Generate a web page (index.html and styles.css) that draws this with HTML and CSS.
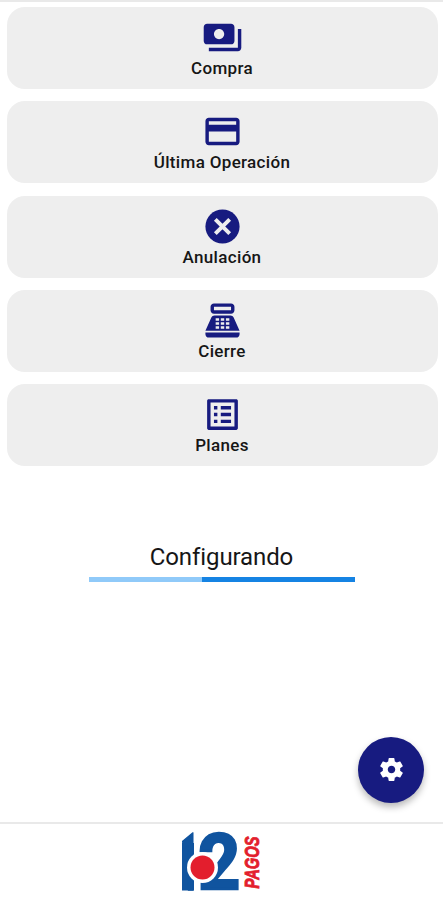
FILE: index.html
```html
<!DOCTYPE html>
<html lang="es">
<head>
    <meta charset="UTF-8">
    <meta name="viewport" content="width=device-width, initial-scale=1.0">
    <title>12 Pagos</title>
    <link rel="stylesheet" href="styles.css">
</head>
<body>

    <main class="content">
        <nav class="menu">
            <button class="option">
                <svg class="icon" viewBox="0 0 24 24"><path d="M19 14V6c0-1.1-.9-2-2-2H3c-1.1 0-2 .9-2 2v8c0 1.1.9 2 2 2h14c1.1 0 2-.9 2-2zm-9-1c-1.66 0-3-1.34-3-3s1.34-3 3-3 3 1.34 3 3-1.34 3-3 3zm13-6v11c0 1.1-.9 2-2 2H4v-2h17V7h2z"/></svg>
                <span class="label">Compra</span>
            </button>
            <button class="option">
                <svg class="icon" viewBox="0 0 24 24"><path d="M20 4H4c-1.11 0-1.99.89-1.99 2L2 18c0 1.11.89 2 2 2h16c1.11 0 2-.89 2-2V6c0-1.11-.89-2-2-2zm0 14H4v-6h16v6zm0-10H4V6h16v2z"/></svg>
                <span class="label">Última Operación</span>
            </button>
            <button class="option">
                <svg class="icon" viewBox="0 0 24 24">
                    <circle cx="12" cy="12" r="10"/>
                    <path class="cross" d="M7.8 7.8l8.4 8.4M16.2 7.8l-8.4 8.4"/>
                </svg>
                <span class="label">Anulación</span>
            </button>
            <button class="option">
                <svg class="icon" viewBox="0 0 24 24">
                    <path d="M17 2H7c-1.1 0-2 .9-2 2v2c0 1.1.9 2 2 2h10c1.1 0 2-.9 2-2V4c0-1.1-.9-2-2-2zm0 4H7V4h10v2zm3 16H4c-1.1 0-2-.9-2-2v-1h20v1c0 1.1-.9 2-2 2zm-1.47-11.81C18.21 9.47 17.49 9 16.7 9H7.3c-.79 0-1.51.47-1.83 1.19L2 18h20l-3.47-7.81z"/>
                    <path class="keys" d="M8 10.7h2v1.5H8zm3 0h2v1.5h-2zm3 0h2v1.5h-2zM8 13h2v1.5H8zm3 0h2v1.5h-2zm3 0h2v1.5h-2zM8 15.3h2v1.5H8zm3 0h2v1.5h-2zm3 0h2v1.5h-2z"/>
                </svg>
                <span class="label">Cierre</span>
            </button>
            <button class="option">
                <svg class="icon" viewBox="0 0 24 24"><path d="M19 5v14H5V5h14m1.1-2H3.9c-.5 0-.9.4-.9.9v16.2c0 .4.4.9.9.9h16.2c.4 0 .9-.5.9-.9V3.9c0-.5-.5-.9-.9-.9zM11 7h6v2h-6V7zm0 4h6v2h-6v-2zm0 4h6v2h-6zM7 7h2v2H7zm0 4h2v2H7zm0 4h2v2H7z"/></svg>
                <span class="label">Planes</span>
            </button>
        </nav>

        <section class="status">
            <p class="status-text">Configurando</p>
            <div class="progress"><div class="progress-bar"></div></div>
        </section>

        <button class="fab" aria-label="Configuración">
            <svg class="fab-icon" viewBox="0 0 24 24"><path d="M19.14 12.94c.04-.3.06-.61.06-.94 0-.32-.02-.64-.07-.94l2.03-1.58c.18-.14.23-.41.12-.61l-1.92-3.32c-.12-.22-.37-.29-.59-.22l-2.39.96c-.5-.38-1.03-.7-1.62-.94l-.36-2.54c-.04-.24-.24-.41-.48-.41h-3.84c-.24 0-.43.17-.47.41l-.36 2.54c-.59.24-1.13.57-1.62.94l-2.39-.96c-.22-.08-.47 0-.59.22L2.74 8.87c-.12.21-.08.47.12.61l2.03 1.58c-.05.3-.09.63-.09.94s.02.64.07.94l-2.03 1.58c-.18.14-.23.41-.12.61l1.92 3.32c.12.22.37.29.59.22l2.39-.96c.5.38 1.03.7 1.62.94l.36 2.54c.05.24.24.41.48.41h3.84c.24 0 .44-.17.47-.41l.36-2.54c.59-.24 1.13-.56 1.62-.94l2.39.96c.22.08.47 0 .59-.22l1.92-3.32c.12-.22.07-.47-.12-.61l-2.01-1.58zM12 15.1c-1.7 0-3.1-1.4-3.1-3.1s1.4-3.1 3.1-3.1 3.1 1.4 3.1 3.1-1.4 3.1-3.1 3.1z"/></svg>
        </button>
    </main>

    <footer class="footer">
        <svg class="logo" viewBox="0 0 80 62">
            <rect class="logo-stem" x="0" y="12" width="12" height="47.5"/>
            <text class="logo-number logo-one" transform="translate(-2.6 58.7) scale(.44 1)" font-size="79">1</text>
            <text class="logo-number logo-two" transform="translate(16.2 58.2) scale(.95 1)" font-size="77">2</text>
            <circle cx="20.5" cy="36.5" r="15.5" fill="#fff"/>
            <circle cx="20.5" cy="36.5" r="12" fill="#e31e2d"/>
            <text class="logo-word" transform="translate(76.8 57.5) rotate(-90)" textLength="52" lengthAdjust="spacingAndGlyphs">PAGOS</text>
        </svg>
    </footer>

</body>
</html>
```
FILE: styles.css
```css
* {
    box-sizing: border-box;
}
body {
    margin: 0;
    height: 900px;
    display: flex;
    flex-direction: column;
    background-color: #fff;
    color: #161616;
    font-family: Roboto, "Liberation Sans", sans-serif;
    overflow: hidden;
}
button {
    border: none;
    padding: 0;
    font: inherit;
    color: inherit;
    cursor: pointer;
}
.content {
    position: relative;
    flex: 1;
    border-top: 2px solid #e9e9e9;
}
.menu {
    display: flex;
    flex-direction: column;
    gap: 12.25px;
    padding: 5.1px 5.5px 0 6.5px;
}
.option {
    height: 82px;
    padding-top: 10px;
    display: flex;
    flex-direction: column;
    align-items: center;
    border-radius: 18px;
    background-color: #eee;
}
.icon {
    width: 41px;
    height: 41px;
    fill: #171b80;
}
.keys {
    fill: #eee;
}
.cross {
    stroke: #eee;
    stroke-width: 2.3;
}
.label {
    font-size: 17px;
    font-weight: 500;
    line-height: 21px;
    letter-spacing: 0.33px;
}
.status {
    display: flex;
    flex-direction: column;
    align-items: center;
    padding-top: 76.2px;
}
.status-text {
    margin: 0;
    font-size: 24px;
    line-height: 30px;
    letter-spacing: -0.1px;
}
.progress {
    width: 266px;
    height: 5px;
    margin-top: 5px;
    background-color: #90caf9;
}
.progress-bar {
    width: 57.3%;
    height: 100%;
    margin-left: auto;
    background-color: #1583e3;
}
/* floating over the content, bottom right */
.fab {
    position: absolute;
    right: 19px;
    bottom: 19px;
    width: 66px;
    height: 66px;
    display: flex;
    align-items: center;
    justify-content: center;
    border-radius: 50%;
    background-color: #171b80;
    box-shadow: 0 4px 7px rgba(0, 0, 0, 0.28);
}
.fab-icon {
    width: 29px;
    height: 29px;
    fill: #fff;
}
.footer {
    height: 78.5px;
    padding-top: 7.5px;
    display: flex;
    justify-content: center;
    border-top: 2px solid #e9e9e9;
}
.logo {
    width: 80px;
    height: 62px;
    overflow: visible;
}
.logo-stem {
    fill: #10549f;
}
.logo-number {
    font-family: Roboto, sans-serif;
    font-weight: 700;
    fill: #10549f;
}
.logo-one {
    stroke: #10549f;
    stroke-width: 1.6;
}
.logo-two {
    stroke: #10549f;
    stroke-width: 2.6;
}
.logo-word {
    font-family: "Liberation Sans", sans-serif;
    font-size: 20px;
    font-weight: 700;
    font-style: italic;
    fill: #e31e2d;
    stroke: #e31e2d;
    stroke-width: 0.9;
}
```
